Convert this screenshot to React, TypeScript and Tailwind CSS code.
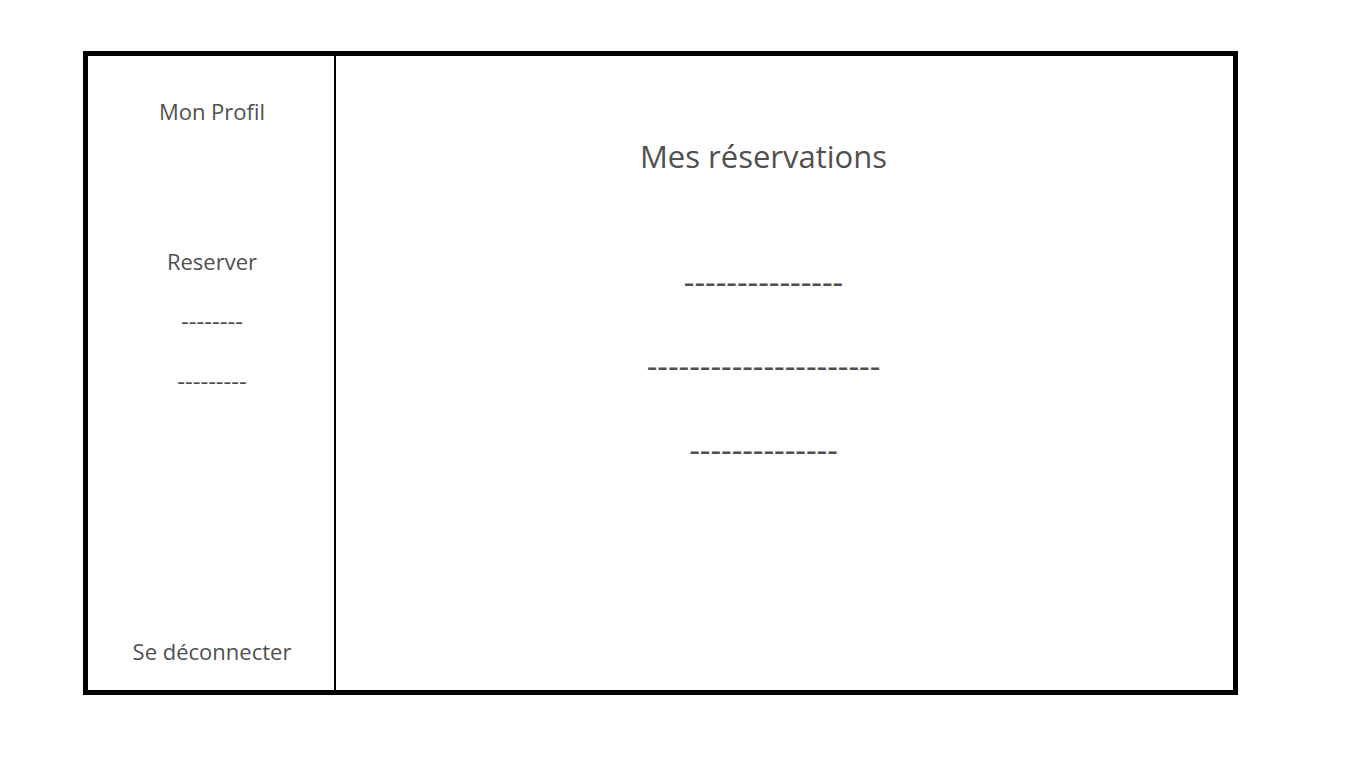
const rows = [
  '---------------',
  '----------------------',
  '--------------',
];

export default function App() {
  return (
    <div className="flex min-h-screen flex-col bg-white pt-[51px] pr-32 pb-[73px] pl-[83px] font-['Open_Sans','Noto_Sans',sans-serif] text-[#505050]">
      <div className="flex flex-1 border-[5px] border-black">
        <nav aria-label="Menu" className="flex w-62 shrink-0 flex-col items-center border-r-2 border-black pt-10 pb-6 pl-0.5 text-[22px] leading-[30px]">
          <a href="#profil">Mon Profil</a>
          <a href="#reserver" className="mt-30">Reserver</a>
          <a href="#lien-1" className="mt-[30px] text-2xl leading-[30px]">--------</a>
          <a href="#lien-2" className="mt-[30px] text-2xl leading-[30px]">---------</a>
          <button type="button" className="mt-auto">Se déconnecter</button>
        </nav>
        <main className="flex flex-1 flex-col items-center pt-[79px] pr-[42px] leading-[42px]">
          <h1 className="text-[31px]">Mes réservations</h1>
          <ul className="mt-[84px] flex flex-col items-center gap-[42px] text-[33px]">
            {rows.map((row) => (
              <li key={row}>{row}</li>
            ))}
          </ul>
        </main>
      </div>
    </div>
  );
}
